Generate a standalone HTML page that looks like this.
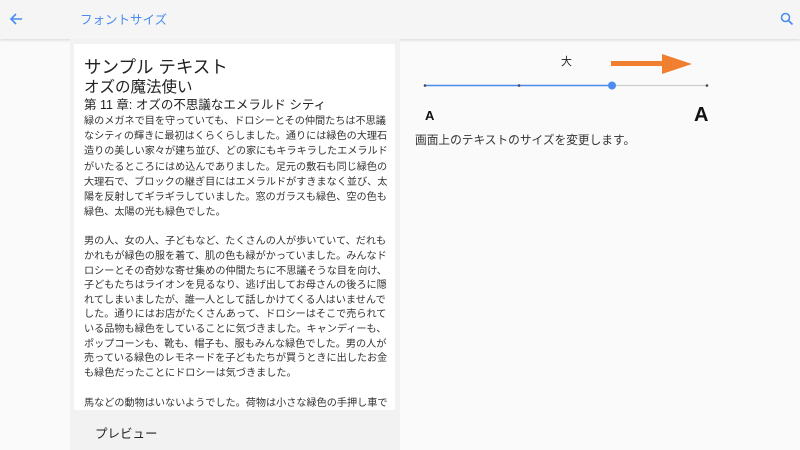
<!DOCTYPE html>
<html><head><meta charset="utf-8"><style>
*{margin:0;padding:0;box-sizing:border-box}
body{width:800px;height:450px;overflow:hidden;background:#fafafa;font-family:"Liberation Sans","Noto Sans CJK JP",sans-serif;color:#222;position:relative}
.hdr{position:absolute;left:0;top:0;width:800px;height:39px;background:#f5f5f5;box-shadow:0 1px 3px rgba(0,0,0,.15)}
.left{position:absolute;left:70px;top:39px;width:330px;height:411px;background:#f2f2f2}
.card{position:absolute;left:74px;top:44px;width:321px;height:366px;background:#fff;overflow:hidden;padding:12px 0 0 10px}
.card p{font-size:10.15px;line-height:15.2px;color:#333;margin-bottom:15px;white-space:nowrap}
.abs{position:absolute;white-space:nowrap}
</style></head><body>
<div class="hdr">
<svg class="abs" style="left:9px;top:12px" width="14" height="14" viewBox="0 0 14 14"><path d="M13 7H2M7 2L2 7l5 5" stroke="#4a8cf0" stroke-width="1.6" fill="none"/></svg>
<div class="abs" style="left:80px;top:9px;font-size:12.5px;color:#4a8cf0">フォントサイズ</div>
<svg class="abs" style="left:780px;top:12px" width="14" height="14" viewBox="0 0 14 14"><circle cx="5.5" cy="5.5" r="4" stroke="#4a8cf0" stroke-width="1.6" fill="none"/><path d="M8.5 8.5L12.5 12.5" stroke="#4a8cf0" stroke-width="1.8"/></svg>
</div>
<div class="left"></div>
<div class="card">
<div style="font-size:17.5px;line-height:22px;white-space:nowrap">サンプル テキスト</div>
<div style="font-size:15.5px;line-height:19px;white-space:nowrap">オズの魔法使い</div>
<div style="font-size:12.5px;line-height:17px;white-space:nowrap">第 11 章: オズの不思議なエメラルド シティ</div>
<p>緑のメガネで目を守っていても、ドロシーとその仲間たちは不思議<br>なシティの輝きに最初はくらくらしました。通りには緑色の大理石<br>造りの美しい家々が建ち並び、どの家にもキラキラしたエメラルド<br>がいたるところにはめ込んでありました。足元の敷石も同じ緑色の<br>大理石で、ブロックの継ぎ目にはエメラルドがすきまなく並び、太<br>陽を反射してギラギラしていました。窓のガラスも緑色、空の色も<br>緑色、太陽の光も緑色でした。</p>
<p style="line-height:14.6px">男の人、女の人、子どもなど、たくさんの人が歩いていて、だれも<br>かれもが緑色の服を着て、肌の色も緑がかっていました。みんなド<br>ロシーとその奇妙な寄せ集めの仲間たちに不思議そうな目を向け、<br>子どもたちはライオンを見るなり、逃げ出してお母さんの後ろに隠<br>れてしまいましたが、誰一人として話しかけてくる人はいませんで<br>した。通りにはお店がたくさんあって、ドロシーはそこで売られて<br>いる品物も緑色をしていることに気づきました。キャンディーも、<br>ポップコーンも、靴も、帽子も、服もみんな緑色でした。男の人が<br>売っている緑色のレモネードを子どもたちが買うときに出したお金<br>も緑色だったことにドロシーは気づきました。</p>
<p>馬などの動物はいないようでした。荷物は小さな緑色の手押し車で<br>運ばれていました。</p>
</div>
<div class="abs" style="left:95px;top:423px;font-size:12.5px;color:#222">プレビュー</div>
<div class="abs" style="left:561px;top:53px;font-size:11px">大</div>
<svg class="abs" style="left:600px;top:50px" width="100" height="30"><path d="M11 13.5L62 13.5" stroke="#f08030" stroke-width="5"/><path d="M62 4L92 14L62 24Z" fill="#f08030"/></svg>
<svg class="abs" style="left:420px;top:80px" width="295" height="12">
<line x1="5" y1="5.5" x2="287" y2="5.5" stroke="#ccc" stroke-width="1.2"/>
<line x1="5" y1="5.5" x2="192" y2="5.5" stroke="#4a8cf0" stroke-width="1.5"/>
<circle cx="5" cy="5.5" r="1.3" fill="#444"/><circle cx="99" cy="5.5" r="1.3" fill="#444"/><circle cx="287" cy="5.5" r="1.3" fill="#444"/>
<circle cx="192" cy="5.5" r="4" fill="#4a8cf0"/></svg>
<div class="abs" style="left:425px;top:108px;font-size:13px;font-weight:bold;color:#111">A</div>
<div class="abs" style="left:694px;top:104px;font-size:20px;font-weight:bold;color:#111">A</div>
<div class="abs" style="left:415px;top:131px;font-size:11.7px;color:#333">画面上のテキストのサイズを変更します。</div>
</body></html>
